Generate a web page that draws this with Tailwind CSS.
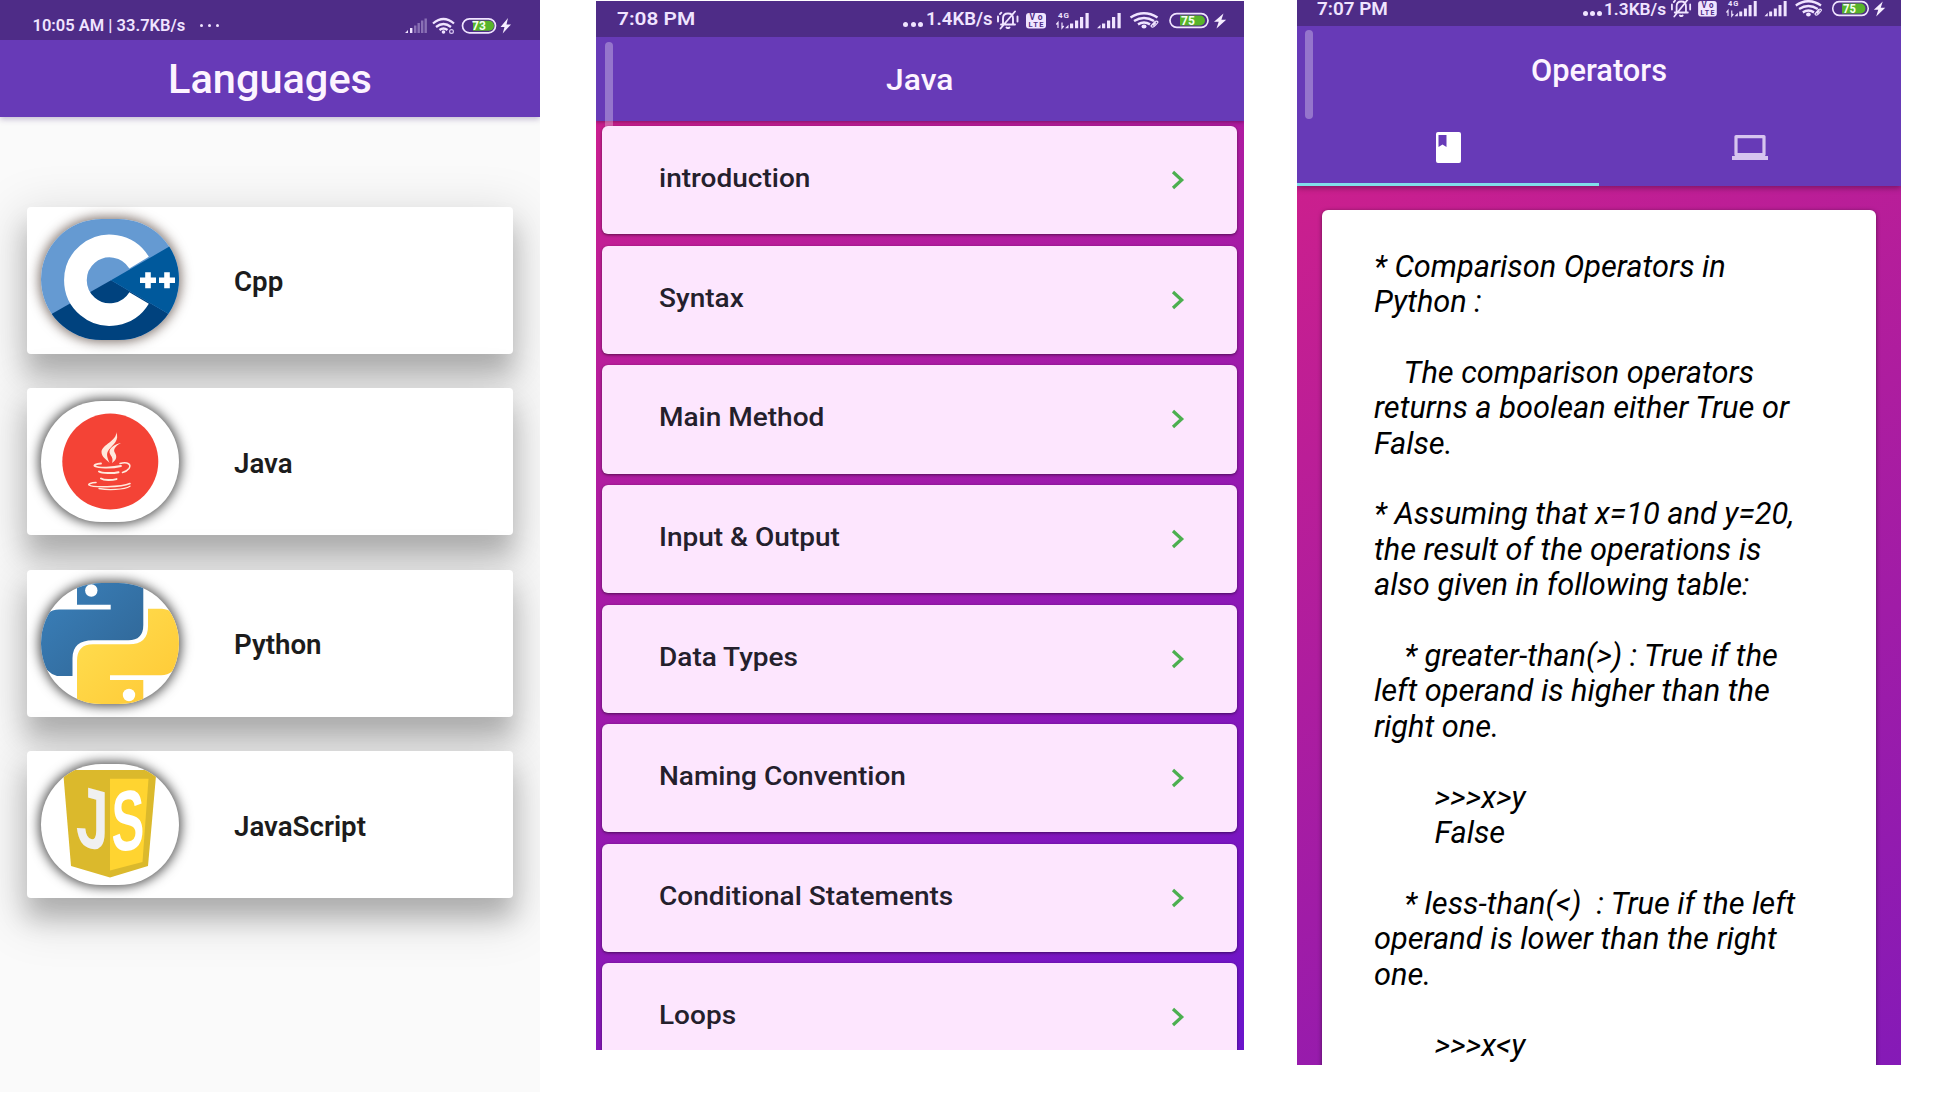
<!DOCTYPE html>
<html lang="en">
<head>
<meta charset="utf-8">
<title>Languages</title>
<script src="https://cdn.jsdelivr.net/npm/@tailwindcss/browser@4"></script>
</head>
<body class="h-[1112px] w-[1944px] overflow-hidden bg-white font-['Roboto',sans-serif]">

<!-- Shared status icons -->
<svg class="hidden">
  <symbol id="status" viewBox="0 0 230 20" preserveAspectRatio="none">
    <g fill="none" stroke="#f0e4ff" stroke-width="1.900" stroke-linecap="round">
      <path d="M4 14.500h14M6 14V8.500c0-3 2-5 5-5s5 2 5 5V14M9.500 17.500q1.500 1.200 3 0M3.500 18.500 18 1.500M1 6.500v5M20.500 6.500v5M3 4l1.300-1.300"/>
    </g>
    <rect x="29" y="3" width="20" height="15.500" rx="3" fill="#f0e4ff"/>
    <text x="39" y="10.300" text-anchor="middle" font-size="8.500" font-weight="700" fill="#4e2c87" textLength="13">Vo</text>
    <text x="39" y="17.300" text-anchor="middle" font-size="7.500" font-weight="700" fill="#4e2c87" textLength="15">LTE</text>
    <text x="61" y="8" font-size="8" font-weight="700" fill="#f0e4ff" textLength="11">4G</text>
    <g fill="none" stroke="#f0e4ff" stroke-width="1.200"><path d="M61 18v-5.500l-1.700 2M65 12.500V18l1.700-2"/></g>
    <g fill="#f0e4ff">
      <path d="M68 18.300l3.500-3.500v3.500zM73 13.500h3.200v4.800H73zM78 10.500h3.200v7.800H78zM83 7h3.200v11.300H83zM88.500 3h3.200v15.300h-3.200z"/>
      <path d="M100 18.300l3.500-3.500v3.500zM105 13.500h3.200v4.800H105zM110 10.500h3.200v7.800H110zM115 7h3.200v11.300H115zM120.500 3h3.200v15.300h-3.200z"/>
      <ellipse cx="147" cy="16.500" rx="2.500" ry="2"/>
    </g>
    <g fill="none" stroke="#f0e4ff" stroke-width="2.500"><path d="M133.500 7.500q13.500-8.500 27 0M137 11q10-6 20 0M141 14.300q6-3.500 12 0"/></g>
    <g fill="none" stroke="#f0e4ff" stroke-width="1.200"><path d="M154 16l4-4.500q2-1 3 .5 0 1-4 4.500-2 1.500-3-.5zM156 15.500l3-3"/></g>
    <rect x="173" y="3.700" width="38" height="13.600" rx="6.800" fill="none" stroke="#f0e4ff" stroke-width="1.700"/>
    <path d="M183 5.500h20a5 5 0 0 1 0 10h-20z" fill="#58b42a"/>
    <text x="191" y="14.800" text-anchor="middle" font-size="12" font-weight="700" fill="#f6fff0">75</text>
    <path d="M226.500 3.500l-9.500 8.300h4.700l-2.200 6.700 9.700-8.800h-4.800z" fill="#f6eeff"/>
  </symbol>
  <symbol id="chevron" viewBox="0 0 14 20">
    <path d="M2 2l8.700 8L2 18" fill="none" stroke="#4caf50" stroke-width="3.200"/>
  </symbol>
</svg>

<div class="flex items-start">

  <!-- Languages -->
  <section class="relative h-[1092px] w-[540px] shrink-0 overflow-hidden bg-[#fafafa]">
    <header class="relative z-10 shadow-[0_2px_6px_rgba(60,30,110,0.3)]">
      <div class="flex h-10 items-center bg-[#4e2c87] pt-[11px] pl-[32.500px] pr-[28px] text-[#f0e4ff]">
        <span class="w-[153px] text-[16.500px] leading-5 font-semibold whitespace-nowrap">10:05 AM | 33.7KB/s</span>
        <span class="ml-[14px] flex gap-[4.500px]"><i class="size-[3.500px] rounded-full bg-[#f0e4ff]"></i><i class="size-[3.500px] rounded-full bg-[#f0e4ff]"></i><i class="size-[3.500px] rounded-full bg-[#f0e4ff]"></i></span>
        <svg class="ml-auto h-[18px] w-[108px]" viewBox="0 0 108 18">
          <path d="M1 16l3-3v3zM6 11h2.400v5H6z" fill="#f0e4ff"/>
          <path d="M10 8.500h2.400V16H10zM13.500 6h2.400v10h-2.400zM17 3.500h2.400V16H17zM20.500 1.500h2.400V16h-2.400z" fill="#8a70b5"/>
          <g fill="none" stroke="#f0e4ff" stroke-width="2.300"><path d="M29 6.500q10.500-9 21 0M32 10q7.500-6 15 0M35.500 13q4-3 8 0"/></g>
          <circle cx="39.500" cy="15" r="1.800" fill="#f0e4ff"/><circle cx="47.500" cy="14.500" r="1.900" fill="none" stroke="#d6c4ef" stroke-width="1.200"/>
          <rect x="58.500" y="1.800" width="33" height="14" rx="7" fill="none" stroke="#f0e4ff" stroke-width="1.700"/>
          <path d="M69 3.800h16a5 5 0 0 1 0 10H69z" fill="#58b42a"/>
          <text x="75" y="13.300" text-anchor="middle" font-size="12" font-weight="700" fill="#f6fff0">73</text>
          <path d="M104 1l-7.500 9h4l-1.800 6.500L107 7.500h-4.500z" fill="#f6eeff"/>
        </svg>
      </div>
      <h1 class="flex h-[77px] items-center justify-center bg-[#673ab7] text-[41.500px] leading-none font-medium text-[#fdf4ff]">Languages</h1>
    </header>

    <ul class="flex flex-col gap-[34.500px] px-[27.400px] pt-[89.500px]">
      <li class="flex h-[147px] items-center gap-[55px] rounded bg-white pl-[13.600px] shadow-[0_20px_26px_rgba(0,0,0,0.22),0_14px_50px_10px_rgba(0,0,0,0.13)]">
        <span class="mb-0.5 h-[121px] w-[138px] overflow-hidden rounded-full shadow-[0_0_12px_2px_rgba(60,40,30,0.65)]">
          <svg class="size-full" viewBox="0 0 138 121">
            <path d="M0 0h138v121H0z" fill="#659ad2"/>
            <path d="M0 101 70 61.300 138 101v20H0z" fill="#00427e"/>
            <path d="M70 61.300 138 22v79z" fill="#00599c"/>
            <path d="M98.100 43.600A34.300 34.300 0 1 0 98.100 79" fill="none" stroke="#fff" stroke-width="22.700"/>
            <g stroke="#fff" stroke-width="5.600"><path d="M99 61.300h16M107 53.300v16M118 61.300h16M126 53.300v16"/></g>
          </svg>
        </span>
        <span class="mt-1 text-[27.700px] leading-8 font-semibold text-[#1c1c1c]">Cpp</span>
      </li>
      <li class="flex h-[147px] items-center gap-[55px] rounded bg-white pl-[13.600px] shadow-[0_20px_26px_rgba(0,0,0,0.22),0_14px_50px_10px_rgba(0,0,0,0.13)]">
        <span class="h-[121px] w-[138px] overflow-hidden rounded-full bg-white shadow-[0_0_12px_2px_rgba(0,0,0,0.7)]">
          <svg class="size-full" viewBox="0 0 138 121">
            <circle cx="69.300" cy="60.500" r="48" fill="#f44336"/>
            <g fill="#ffe9dc">
              <path d="M75 31c2 8-14.500 13-14.500 20 0 5 5.500 8 8 11-2-5.500-4-9-.5-13.500C72 43.500 79 39 75 31z"/>
              <path d="M80 42c-6 1-12 5-11.500 9.500.5 3 4.500 5 2.500 10.500 5-3 5-7 3-10s-.5-6.500 6-10z"/>
            </g>
            <g fill="none" stroke="#ffe9dc" stroke-width="2" stroke-linecap="round">
              <path d="M60 62.500c-5 .3-8 1.800-6 2.800 4 2 18 1.600 26-.3" stroke-width="1.800"/>
              <path d="M79 62.500c8-2 11.500 1 9 5-1.500 2-4 3.300-6.500 4" stroke-width="1.500"/>
              <path d="M58 70.500c3 2 14 2 19.500.7M60 77.500c3 2 11 1.800 15.500.6"/>
              <path d="M55 81.500c-5 .2-8 1.500-7 2.500 3 2.500 32 2.500 41-1.500" stroke-width="1.600"/>
              <path d="M58 87.500c9 1.800 25 1.300 31-2.300" stroke-width="1.300"/>
            </g>
          </svg>
        </span>
        <span class="mt-1 text-[27.700px] leading-8 font-semibold text-[#1c1c1c]">Java</span>
      </li>
      <li class="flex h-[147px] items-center gap-[55px] rounded bg-white pl-[13.600px] shadow-[0_20px_26px_rgba(0,0,0,0.22),0_14px_50px_10px_rgba(0,0,0,0.13)]">
        <span class="h-[121px] w-[138px] overflow-hidden rounded-full bg-white shadow-[0_0_12px_2px_rgba(0,0,0,0.7)]">
          <svg class="size-full" viewBox="0 0 138 121">
            <defs>
              <linearGradient id="blue" x1="0" y1="0" x2="1" y2="1"><stop offset="0" stop-color="#3b82bd"/><stop offset="1" stop-color="#2f6493"/></linearGradient>
              <linearGradient id="yellow" x1="0" y1="0" x2="1" y2="1"><stop offset="0" stop-color="#ffe052"/><stop offset="1" stop-color="#ffc733"/></linearGradient>
            </defs>
            <path d="M36-5h66.300v47q0 15.300-15 15.300H52q-20.500 0-20.500 18V93H16Q-2 88-2 60q0-33.500 20-33.500h51.700v-4.800H36z" fill="url(#blue)"/>
            <circle cx="50.300" cy="7.500" r="6.200" fill="#fff"/>
            <path d="M107 25.700h14q19 1.300 19 34.300 0 32-20 32.300H69V97h33.300v28H36V78q0-16.700 16-16.700h36q19 0 19-18z" fill="url(#yellow)"/>
            <circle cx="88" cy="112" r="6.200" fill="#fff"/>
          </svg>
        </span>
        <span class="mt-1 text-[27.700px] leading-8 font-semibold text-[#1c1c1c]">Python</span>
      </li>
      <li class="flex h-[147px] items-center gap-[55px] rounded bg-white pl-[13.600px] shadow-[0_20px_26px_rgba(0,0,0,0.22),0_14px_50px_10px_rgba(0,0,0,0.13)]">
        <span class="h-[121px] w-[138px] overflow-hidden rounded-full bg-white shadow-[0_0_12px_2px_rgba(0,0,0,0.7)]">
          <svg class="size-full" viewBox="0 0 138 121">
            <path d="M22 6h93.500L107 102l-38 11.500L30 102z" fill="#dbb92c"/>
            <path d="M69 14.700h38.500l-6 83.300L69 106.500z" fill="#ffd430"/>
            <text transform="matrix(.98 .26 0 1.440 35 80)" font-size="60" font-weight="700" fill="#f0f0f0" font-family="Liberation Sans">J</text>
            <text transform="matrix(.82 -.1 0 1.420 70.500 88)" font-size="60" font-weight="700" fill="#fff" font-family="Liberation Sans">S</text>
          </svg>
        </span>
        <span class="mt-1 text-[27.700px] leading-8 font-semibold text-[#1c1c1c]">JavaScript</span>
      </li>
    </ul>
  </section>

  <!-- Java topics -->
  <section class="relative mt-px ml-14 h-[1049px] w-[648px] shrink-0 overflow-hidden bg-[linear-gradient(150deg,#d4208a,#6a14cb)]">
    <header class="shadow-[0_1px_4px_rgba(0,0,0,0.35)]">
      <div class="flex h-9 items-center bg-[#4e2c87] pl-[21px] pr-[17px] text-[17.500px] leading-5 font-semibold text-[#f0e4ff]">
        <span class="origin-left scale-x-[1.19]">7:08 PM</span>
        <span class="mt-[10px] ml-auto flex gap-[2.500px]"><i class="size-[5px] rounded-full bg-[#f0e4ff]"></i><i class="size-[5px] rounded-full bg-[#f0e4ff]"></i><i class="size-[5px] rounded-full bg-[#f0e4ff]"></i></span>
        <span class="ml-[3px] w-[71px] origin-left scale-x-[1.06]">1.4KB/s</span>
        <svg class="mt-[1px] h-5 w-[230px] shrink-0"><use href="#status"/></svg>
      </div>
      <div class="flex h-[84px] items-center justify-center bg-[#673ab7] pt-0.5"><h1 class="scale-x-[1.06] text-[30px] leading-none font-medium text-[#fdf4ff]">Java</h1></div>
    </header>
    <div class="absolute top-[41px] left-[9px] h-[90px] w-2 rounded-full bg-white/30"></div>
    <ul class="relative flex flex-col gap-[11.400px] pt-[5.200px] pr-[7px] pl-[6px] text-[26px] leading-8 font-medium text-[#24202c]">
      <li class="flex h-[108.200px] shrink-0 items-center justify-between rounded-md bg-[#fde6fe] pr-[52.500px] pb-1 pl-[57px] shadow-[0_1px_3px_rgba(0,0,0,0.5)]"><span class="origin-left scale-x-[1.077]">introduction</span><svg class="mt-1 h-5 w-3.5"><use href="#chevron"/></svg></li>
      <li class="flex h-[108.200px] shrink-0 items-center justify-between rounded-md bg-[#fde6fe] pr-[52.500px] pb-1 pl-[57px] shadow-[0_1px_3px_rgba(0,0,0,0.5)]"><span class="origin-left scale-x-[1.077]">Syntax</span><svg class="mt-1 h-5 w-3.5"><use href="#chevron"/></svg></li>
      <li class="flex h-[108.200px] shrink-0 items-center justify-between rounded-md bg-[#fde6fe] pr-[52.500px] pb-1 pl-[57px] shadow-[0_1px_3px_rgba(0,0,0,0.5)]"><span class="origin-left scale-x-[1.077]">Main Method</span><svg class="mt-1 h-5 w-3.5"><use href="#chevron"/></svg></li>
      <li class="flex h-[108.200px] shrink-0 items-center justify-between rounded-md bg-[#fde6fe] pr-[52.500px] pb-1 pl-[57px] shadow-[0_1px_3px_rgba(0,0,0,0.5)]"><span class="origin-left scale-x-[1.077]">Input &amp; Output</span><svg class="mt-1 h-5 w-3.5"><use href="#chevron"/></svg></li>
      <li class="flex h-[108.200px] shrink-0 items-center justify-between rounded-md bg-[#fde6fe] pr-[52.500px] pb-1 pl-[57px] shadow-[0_1px_3px_rgba(0,0,0,0.5)]"><span class="origin-left scale-x-[1.077]">Data Types</span><svg class="mt-1 h-5 w-3.5"><use href="#chevron"/></svg></li>
      <li class="flex h-[108.200px] shrink-0 items-center justify-between rounded-md bg-[#fde6fe] pr-[52.500px] pb-1 pl-[57px] shadow-[0_1px_3px_rgba(0,0,0,0.5)]"><span class="origin-left scale-x-[1.077]">Naming Convention</span><svg class="mt-1 h-5 w-3.5"><use href="#chevron"/></svg></li>
      <li class="flex h-[108.200px] shrink-0 items-center justify-between rounded-md bg-[#fde6fe] pr-[52.500px] pb-1 pl-[57px] shadow-[0_1px_3px_rgba(0,0,0,0.5)]"><span class="origin-left scale-x-[1.077]">Conditional Statements</span><svg class="mt-1 h-5 w-3.5"><use href="#chevron"/></svg></li>
      <li class="flex h-[108.200px] shrink-0 items-center justify-between rounded-md bg-[#fde6fe] pr-[52.500px] pb-1 pl-[57px] shadow-[0_1px_3px_rgba(0,0,0,0.5)]"><span class="origin-left scale-x-[1.077]">Loops</span><svg class="mt-1 h-5 w-3.5"><use href="#chevron"/></svg></li>
    </ul>
  </section>

  <!-- Operators lesson -->
  <section class="relative ml-[53px] h-[1065px] w-[604px] shrink-0 overflow-hidden bg-[linear-gradient(152deg,#d62087,#851ab7)]">
    <header class="relative z-10 shadow-[0_2px_6px_rgba(0,0,0,0.35)]">
      <div class="flex h-[26px] items-center bg-[#4e2c87] pb-[9px] pl-[20px] pr-[15px] text-[17.300px] leading-5 font-semibold text-[#f0e4ff]">
        <span class="text-[18.900px]">7:07 PM</span>
        <span class="mt-[10px] ml-auto flex gap-[2px]"><i class="size-[5px] rounded-full bg-[#f0e4ff]"></i><i class="size-[5px] rounded-full bg-[#f0e4ff]"></i><i class="size-[5px] rounded-full bg-[#f0e4ff]"></i></span>
        <span class="ml-[2px] w-[67px]">1.3KB/s</span>
        <svg class="-mt-[2px] h-5 w-[215px] shrink-0"><use href="#status"/></svg>
      </div>
      <div class="h-[160px] bg-[#673ab7]">
        <h1 class="pt-[29px] text-center text-[30.800px] leading-8 font-medium text-[#fdf4ff]">Operators</h1>
        <div class="mt-[36px] grid h-[63px] grid-cols-2">
          <span class="flex justify-center border-b-[3px] border-[#80deea] pt-[9px]">
            <svg class="h-[31px] w-[25px]" viewBox="0 0 25 31"><path fill-rule="evenodd" d="M2 0h21a2 2 0 0 1 2 2v27a2 2 0 0 1-2 2H2a2 2 0 0 1-2-2V2a2 2 0 0 1 2-2zM2.500 3v12l4-2.500 4 2.500V3z" fill="#fff"/></svg>
          </span>
          <span class="flex justify-center pt-[12px]">
            <svg class="h-[25px] w-[36px]" viewBox="0 0 36 25"><path d="M4 1.600h28v18H4z" fill="none" stroke="#d6c4ef" stroke-width="3.200" stroke-linejoin="round"/><path d="M3 18h30v3h3v4H0v-4h3z" fill="#d6c4ef"/></svg>
          </span>
        </div>
      </div>
      <div class="absolute top-[30px] left-2 h-[89px] w-2 rounded-full bg-white/30"></div>
    </header>
    <article class="mx-[25px] mt-6 h-[900px] rounded-md bg-white pt-[38.600px] pl-[52px] text-[30.750px] leading-[35.400px] whitespace-pre text-black italic shadow-[0_1px_4px_rgba(0,0,0,0.5)]">* Comparison Operators in
Python :

    The comparison operators
returns a boolean either True or
False.

* Assuming that x=10 and y=20,
the result of the operations is
also given in following table:

    * greater-than(&gt;) : True if the
left operand is higher than the
right one.

        &gt;&gt;&gt;x&gt;y
        False

    * less-than(&lt;)  : True if the left
operand is lower than the right
one.

        &gt;&gt;&gt;x&lt;y</article>
  </section>
</div>
</body>
</html>
